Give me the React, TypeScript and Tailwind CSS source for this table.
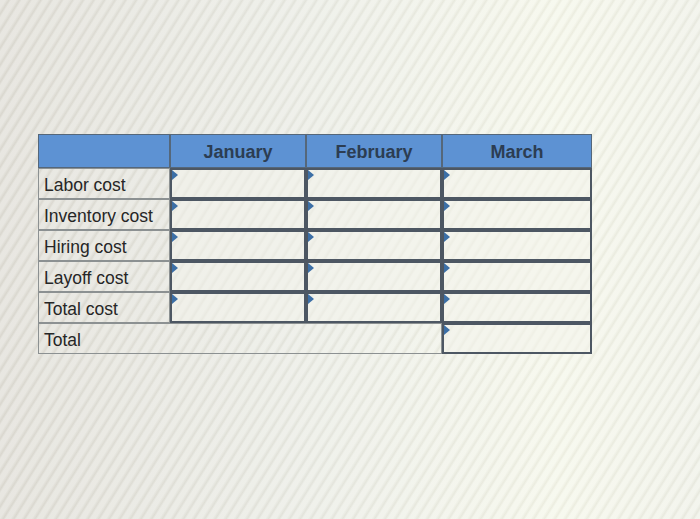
import React from "react";

const rows = ["Labor cost", "Inventory cost", "Hiring cost", "Layoff cost", "Total cost"];

function InputCell() {
  return (
    <div className="relative h-[31px] border-[2px] border-[#4d5763] bg-[#f3f3ec]/50">
      <span className="absolute left-0 top-0 h-0 w-0 border-y-[5px] border-l-[6px] border-y-transparent border-l-[#3c6fa6]" />
    </div>
  );
}

function LabelCell({ text, span }: { text: string; span?: boolean }) {
  return (
    <div
      className={`flex h-[31px] items-center border border-[#8c9192] pl-[5px] pt-[4px] text-[17.5px] leading-none text-[#262626] ${
        span ? "col-span-3" : ""
      }`}
    >
      {text}
    </div>
  );
}

export default function App() {
  return (
    <div
      className="h-[519px] w-[700px] overflow-hidden bg-[#e6e6de] pl-[38px] pt-[134px] font-['Liberation_Sans',Arial,sans-serif]"
      style={{
        backgroundImage:
          "repeating-linear-gradient(-58deg, rgba(255,255,255,0.3) 0px, rgba(255,255,255,0.3) 4px, rgba(190,185,175,0.14) 6px, rgba(255,255,255,0.3) 9px), linear-gradient(90deg, #dedcd4 0%, #e9ebe3 45%, #f4f6e8 80%, #eef0e6 100%)",
      }}
    >
      <div className="grid w-[554px] grid-cols-[132px_136px_136px_150px]">
        <div className="h-[34px] border border-[#55677a] bg-[#5d92d3]" />
        {["January", "February", "March"].map((m) => (
          <div
            key={m}
            className="flex h-[34px] items-center justify-center border border-[#55677a] bg-[#5d92d3] pt-[2px] text-[18px] font-bold text-[#2c3d52]"
          >
            {m}
          </div>
        ))}
        {rows.map((r) => (
          <React.Fragment key={r}>
            <LabelCell text={r} />
            <InputCell />
            <InputCell />
            <InputCell />
          </React.Fragment>
        ))}
        <LabelCell text="Total" span />
        <InputCell />
      </div>
    </div>
  );
}
